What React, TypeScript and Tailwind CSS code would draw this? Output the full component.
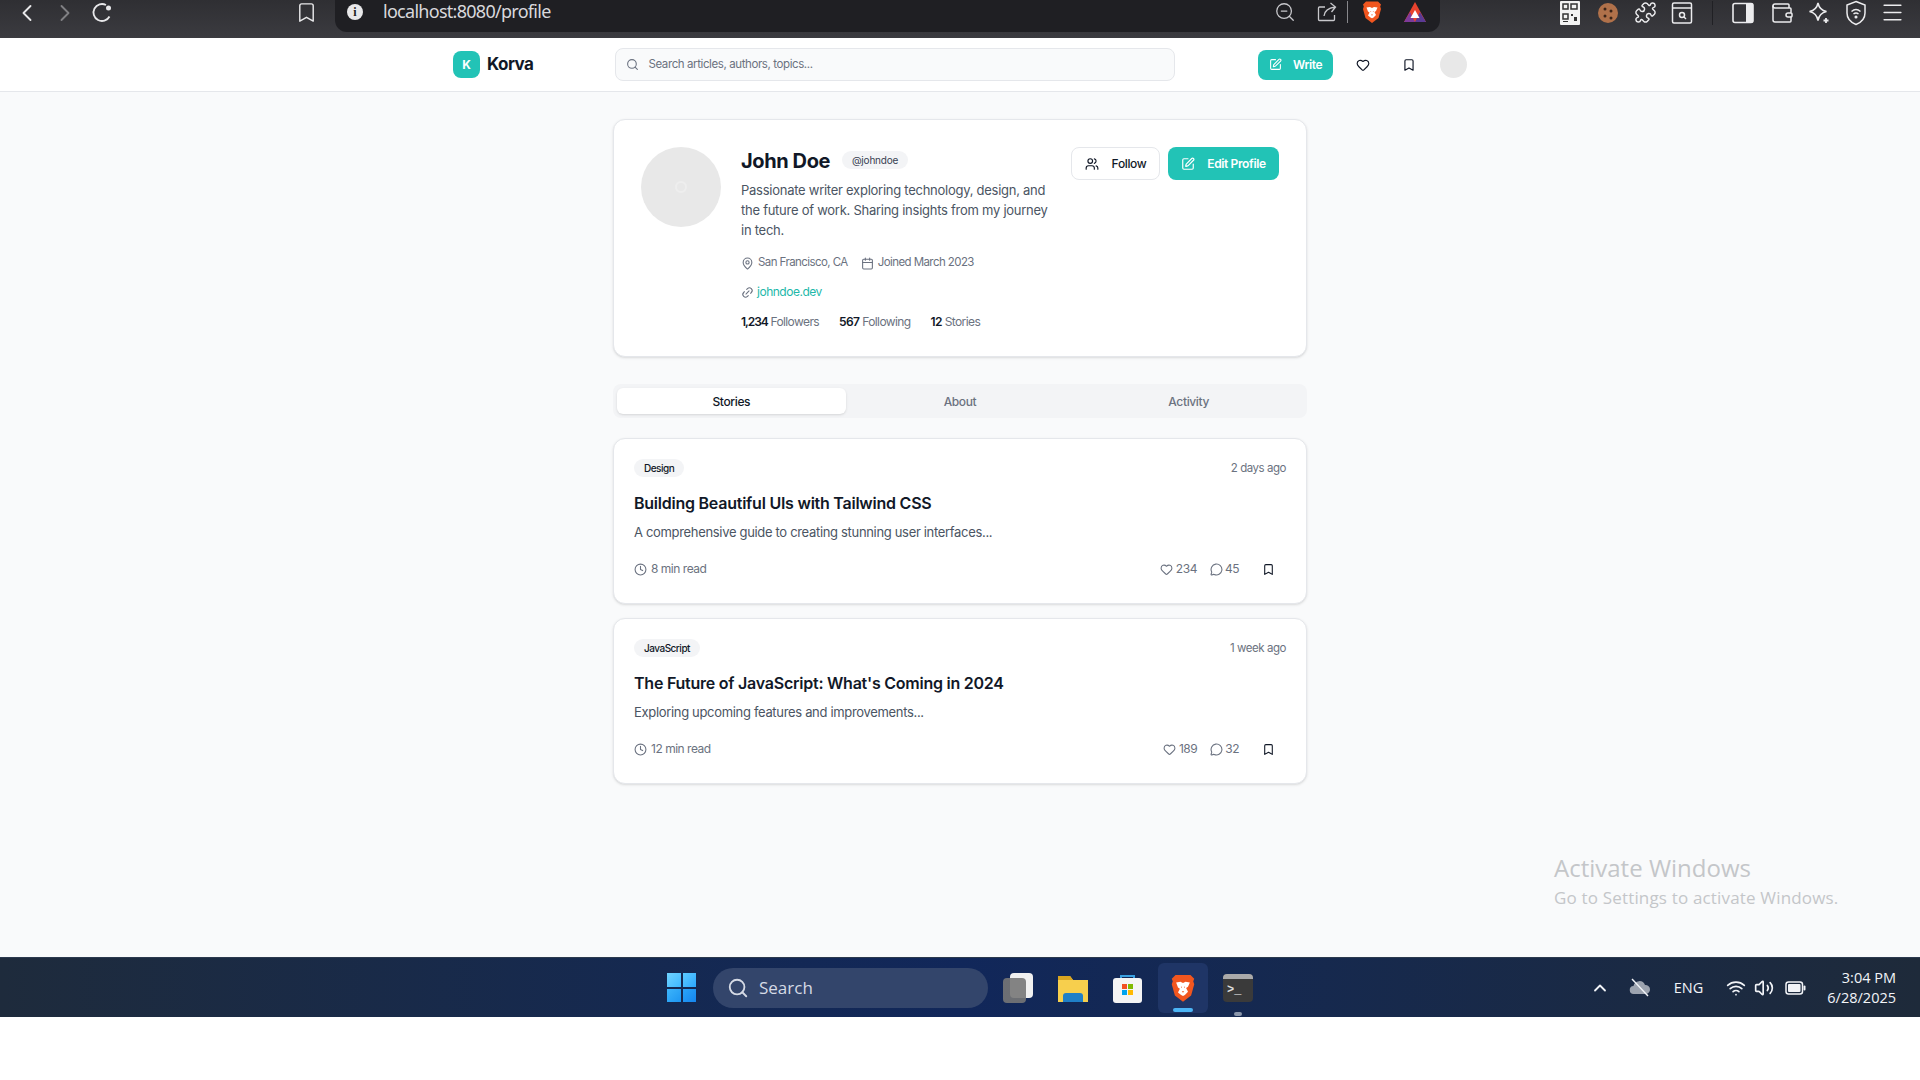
import {
  Bookmark,
  Calendar,
  ChevronLeft,
  ChevronRight,
  ChevronUp,
  Clock,
  Heart,
  Link2,
  MapPin,
  Menu,
  MessageCircle,
  Puzzle,
  Search,
  SquarePen,
  Users,
  Volume2,
  Wallet,
  Wifi,
  ZoomOut,
} from "lucide-react";

const stories = [
  {
    tag: "Design",
    when: "2 days ago",
    title: "Building Beautiful UIs with Tailwind CSS",
    text: "A comprehensive guide to creating stunning user interfaces...",
    read: "8 min read",
    likes: 234,
    comments: 45,
  },
  {
    tag: "JavaScript",
    when: "1 week ago",
    title: "The Future of JavaScript: What's Coming in 2024",
    text: "Exploring upcoming features and improvements...",
    read: "12 min read",
    likes: 189,
    comments: 32,
  },
];

const BraveLogo = ({ size }: { size: number }) => (
  <svg width={size} height={size} viewBox="0 0 24 24">
    <path d="M6 1.500h12l3 3-.8 2 .8 2.500-2.500 9L12 23l-6.500-5L3 9l.8-2.500L3 4.500z" fill="#f1561f" />
    <path d="M6.500 7.500 10 7l2 1 2-1 3.500.5-1.500 3.500-1.500 1 1.500 3-2.500 2.500-1.500.8-1.500-.8L8 15.500l1.500-3-1.500-1z" fill="#fff" />
    <path d="M10.300 11h1l-.5 1zM12.700 11h1l-.5 1zM11 14.500h2l-1 1.200z" fill="#f1561f" />
  </svg>
);

const BrowserBar = () => (
  <div className="h-[38px] flex items-start bg-gradient-to-b from-[#2f2f33] to-[#3b3b40] text-[#e8e8ea]">
    <div className="w-[335px] h-[25px] flex items-center">
      <ChevronLeft size={28} strokeWidth={1.600} className="ml-[13px]" />
      <ChevronRight size={28} strokeWidth={1.600} className="ml-[10px] text-[#808084]" />
      <svg width="23" height="23" viewBox="0 0 23 23" fill="none" stroke="currentColor" strokeWidth="1.800" className="ml-[12px]">
        <path d="M18.500 15.500A8.500 8.500 0 1 1 15 4" />
        <circle cx="17.500" cy="7" r="2.500" fill="currentColor" stroke="none" />
      </svg>
      <Bookmark size={23} strokeWidth={1.500} className="ml-[181px]" />
    </div>
    <div className="w-[1105px] h-[32px] bg-[#1f1f23] rounded-b-xl flex items-center pb-[8px]">
      <div className="ml-[12px] w-[16px] h-[16px] rounded-full bg-[#e8e8ea] text-[#1f1f23] text-[12px] font-bold flex items-center justify-center font-['Liberation_Serif',serif]">
        i
      </div>
      <span className="ml-[20px] -mt-[2px] text-[18px] tracking-[-0.04em] text-[#d8d8dc] font-['Noto_Sans',sans-serif]">
        localhost:8080/profile
      </span>
      <div className="ml-auto flex items-center">
        <ZoomOut size={22} strokeWidth={1.400} className="text-[#c8c8cc]" />
        <svg width="20" height="20" viewBox="0 0 20 20" fill="none" stroke="#c8c8cc" strokeWidth="1.300" className="ml-[21px]">
          <path d="M8 5H2.500A1 1 0 0 0 1.500 6v11.500a1 1 0 0 0 1 1h14a1 1 0 0 0 1-1V13" />
          <path d="M7 14c.5-5 4-8 11-9M13.500 1l5 4-4 5" />
        </svg>
        <div className="ml-[10px] w-px h-[22px] bg-[#88888c]" />
        <div className="ml-[12px]">
          <BraveLogo size={24} />
        </div>
        <svg width="24" height="24" viewBox="0 0 24 24" className="ml-[19px] mr-[13px]">
          <path d="M12 2 23 22H1z" fill="#e8432e" />
          <path d="M1 22 7 12l5 10z" fill="#7d3a9a" />
          <path d="M23 22l-6-10-5 10z" fill="#5a3a94" />
          <path d="M12 10l4.500 8h-9z" fill="#fff" />
        </svg>
      </div>
    </div>
    <div className="flex-1 h-[25px] flex items-center text-[#ececee]">
      <svg width="20" height="24" viewBox="0 0 20 24" className="ml-[120px]">
        <rect width="20" height="24" rx="1" fill="#f2f2f2" />
        <path d="M3 3h5v5H3zM11 3h6v5h-6zM3 13h5v5H3z" fill="none" stroke="#333" strokeWidth="1.500" />
        <path d="M11 13h2v2h-2zM14 16h3v4h-3zM3 20h5v1H3z" fill="#333" />
      </svg>
      <svg width="22" height="24" viewBox="0 0 22 24" className="ml-[17px]">
        <circle cx="11" cy="12" r="10" fill="#b0714a" />
        <circle cx="8" cy="8" r="1.500" fill="#3a2418" />
        <circle cx="14" cy="10" r="1.500" fill="#3a2418" />
        <circle cx="8" cy="15" r="1.500" fill="#3a2418" />
        <circle cx="14" cy="17" r="1.500" fill="#3a2418" />
      </svg>
      <Puzzle size={23} strokeWidth={1.500} className="ml-[15px]" />
      <svg width="22" height="24" viewBox="0 0 22 24" fill="none" stroke="currentColor" strokeWidth="1.500" className="ml-[14px]">
        <rect x="1.500" y="2" width="19" height="20" rx="1.500" />
        <path d="M1.500 7h19" />
        <circle cx="11" cy="14" r="2.500" />
        <path d="m13 16 2 2" />
      </svg>
      <div className="ml-[19px] w-px h-[24px] bg-[#202024]" />
      <svg width="22" height="24" viewBox="0 0 22 24" className="ml-[19px]">
        <rect x="1" y="2.500" width="20" height="19" rx="2" fill="none" stroke="currentColor" strokeWidth="1.600" />
        <rect x="14" y="2.500" width="7" height="19" fill="currentColor" />
      </svg>
      <Wallet size={24} strokeWidth={1.500} className="ml-[16px]" />
      <svg width="24" height="24" viewBox="0 0 24 24" fill="none" stroke="currentColor" strokeWidth="1.500" className="ml-[13px]">
        <path d="M11 2c1 5 3.500 7.500 8.500 8.500-5 1-7.500 3.500-8.500 9-1-5.500-3.500-8-8.500-9C7.500 9.500 10 7 11 2z" />
        <path d="M19 17v5M16.500 19.500h5" strokeWidth="1.800" />
      </svg>
      <svg width="22" height="26" viewBox="0 0 22 26" fill="none" stroke="currentColor" strokeWidth="1.500" className="ml-[14px]">
        <path d="M11 1.500 20 5v8c0 5.500-4 9.500-9 11.500C6 22.500 2 18.500 2 13V5z" />
        <path d="M6.500 11.500c2.700-2.400 6.300-2.400 9 0M8.500 14c1.500-1.200 3.500-1.200 5 0" />
        <circle cx="11" cy="17" r=".8" fill="currentColor" />
      </svg>
      <Menu size={25} strokeWidth={1.500} className="ml-[13px]" />
    </div>
  </div>
);

const Header = () => (
  <header className="h-[54px] bg-white border-b border-[#e5e7eb]">
    <div className="w-[1014px] h-full mx-auto flex items-center">
      <div className="w-[27px] h-[27px] rounded-lg bg-[#22c3b6] text-white text-[12px] font-bold flex items-center justify-center">
        K
      </div>
      <span className="ml-[7px] mt-[1px] text-[17px] font-bold text-[#111827] tracking-[-0.03em]">Korva</span>
      <div className="ml-[82px] w-[561px] h-[33px] rounded-lg border border-[#e5e7eb] bg-[#f9fafb] flex items-center px-[10px] text-[#6b7280]">
        <Search size={13} />
        <span className="ml-[9px] mt-[1px] text-[11.500px] tracking-[-0.035em]">Search articles, authors, topics...</span>
      </div>
      <button className="ml-[83px] w-[75px] h-[30px] rounded-lg bg-[#22c3b6] text-white flex items-center justify-center gap-[11px] text-[12px] font-semibold tracking-[-0.03em]">
        <SquarePen size={13} />
        Write
      </button>
      <Heart size={14} strokeWidth={2} className="ml-[23px] text-[#111827]" />
      <Bookmark size={14} strokeWidth={2} className="ml-[32px] text-[#111827]" />
      <div className="ml-[24px] w-[27px] h-[27px] rounded-full bg-[#e8e8e8]" />
    </div>
  </header>
);

const ProfileCard = () => (
  <section className="h-[238px] rounded-xl border border-[#e5e7eb] bg-white shadow-sm pl-[27px] pr-[27px] pt-[27px] flex items-start">
    <div className="w-[80px] h-[80px] rounded-full bg-[#e8e8e8] shrink-0 flex items-center justify-center">
      <div className="w-[12px] h-[12px] rounded-full border-2 border-[#eeeeee]" />
    </div>
    <div className="ml-[20px] w-[315px]">
      <div className="flex items-center h-[28px]">
        <h1 className="text-[20px] font-bold text-[#111827] tracking-[-0.02em]">John Doe</h1>
        <span className="ml-[12px] -mt-[2px] h-[18px] w-[66px] rounded-full bg-[#f3f4f6] text-[10px] text-[#374151] tracking-[-0.02em] flex items-center justify-center">
          @johndoe
        </span>
      </div>
      <p className="mt-[5px] text-[13px] leading-[20px] text-[#4b5563] tracking-[-0.02em]">
        Passionate writer exploring technology, design, and the future of work. Sharing insights from my journey in tech.
      </p>
      <div className="mt-[13px] flex items-center h-[20px] text-[11.500px] text-[#6b7280] tracking-[-0.05em]">
        <MapPin size={13} />
        <span className="ml-[4px]">San Francisco, CA</span>
        <Calendar size={13} className="ml-[13px]" />
        <span className="ml-[4px]">Joined March 2023</span>
      </div>
      <div className="mt-[9px] flex items-center h-[20px] text-[12px] tracking-[-0.04em]">
        <Link2 size={13} className="text-[#6b7280] -rotate-45" />
        <span className="ml-[3px] text-[#22b8a9]">johndoe.dev</span>
      </div>
      <div className="mt-[10px] flex items-center h-[20px] text-[12px] text-[#6b7280] tracking-[-0.05em] gap-[20px]">
        <span><b className="font-semibold text-[#111827] tracking-[-0.09em]">1,234</b> Followers</span>
        <span><b className="font-semibold text-[#111827]">567</b> Following</span>
        <span><b className="font-semibold text-[#111827]">12</b> Stories</span>
      </div>
    </div>
    <div className="ml-auto flex items-center gap-[8px]">
      <button className="w-[89px] h-[33px] rounded-lg border border-[#e5e7eb] bg-white text-[#111827] flex items-center justify-center gap-[13px] text-[12px] font-medium tracking-[-0.03em]">
        <Users size={14} />
        Follow
      </button>
      <button className="w-[111px] h-[33px] rounded-lg bg-[#22c3b6] text-white flex items-center justify-center gap-[12px] text-[12px] font-semibold tracking-[-0.03em]">
        <SquarePen size={14} />
        Edit Profile
      </button>
    </div>
  </section>
);

const Tabs = () => (
  <div className="mt-[27px] h-[34px] rounded-lg bg-[#f3f4f6] p-[4px] grid grid-cols-3 text-[12px] font-medium text-[#6b7280] tracking-[-0.03em]">
    <div className="rounded-md bg-white shadow-sm text-[#111827] flex items-center justify-center pt-[1px]">Stories</div>
    <div className="flex items-center justify-center pt-[1px]">About</div>
    <div className="flex items-center justify-center pt-[1px]">Activity</div>
  </div>
);

const StoryCard = ({ story }: { story: (typeof stories)[number] }) => (
  <article className="h-[166px] rounded-xl border border-[#e5e7eb] bg-white shadow-sm px-[20px] pt-[20px]">
    <div className="flex items-center justify-between h-[18px]">
      <span className="h-[18px] px-[10px] rounded-full bg-[#f3f4f6] text-[10px] font-medium text-[#111827] tracking-[-0.05em] flex items-center">
        {story.tag}
      </span>
      <span className="mt-[1px] text-[11.500px] text-[#6b7280] tracking-[-0.04em]">{story.when}</span>
    </div>
    <h2 className="mt-[13px] h-[26px] leading-[26px] text-[16px] font-semibold text-[#111827] tracking-[-0.015em]">
      {story.title}
    </h2>
    <p className="mt-[6px] h-[20px] leading-[20px] text-[13px] text-[#4b5563] tracking-[-0.025em]">{story.text}</p>
    <div className="mt-[17px] flex items-center h-[20px] text-[12px] text-[#6b7280] tracking-[-0.04em]">
      <Clock size={13} />
      <span className="ml-[4px]">{story.read}</span>
      <Heart size={13} className="ml-auto" />
      <span className="ml-[3px]">{story.likes}</span>
      <MessageCircle size={13} className="ml-[13px]" />
      <span className="ml-[2px]">{story.comments}</span>
      <Bookmark size={13} strokeWidth={2} className="ml-[23px] mr-[11px] text-[#111827]" />
    </div>
  </article>
);

const Taskbar = () => (
  <div className="h-[60px] grid grid-cols-[1fr_auto_1fr] items-center bg-gradient-to-r from-[#1e2b3c] via-[#11275a] to-[#1e2a3a] border-t border-[#2c3a4e] text-white">
    <div />
    <div className="flex items-center">
      <div className="grid grid-cols-2 gap-[2px] w-[29px] h-[29px]">
        <div className="bg-gradient-to-br from-[#6fd3ff] to-[#3cb8ff]" />
        <div className="bg-gradient-to-br from-[#5ccbff] to-[#2aa8ff]" />
        <div className="bg-gradient-to-br from-[#3cb4fa] to-[#1c96f2]" />
        <div className="bg-gradient-to-br from-[#2aa4f8] to-[#1585ee]" />
      </div>
      <div className="ml-[17px] w-[275px] h-[40px] rounded-full bg-[#33456b] flex items-center pl-[14px] text-[#d5dae5]">
        <Search size={22} strokeWidth={2} />
        <span className="ml-[10px] text-[17px] font-['Open_Sans',sans-serif]">Search</span>
      </div>
      <div className="ml-[15px] relative w-[30px] h-[30px]">
        <div className="absolute right-0 top-0 w-[23px] h-[25px] rounded-sm bg-[#f0f0f0]" />
        <div className="absolute left-0 bottom-0 w-[23px] h-[25px] rounded-sm bg-[#777777]/90" />
      </div>
      <svg width="30" height="28" viewBox="0 0 30 28" className="ml-[25px]">
        <path d="M0 2h12l3 4h15v22H0z" fill="#f7cf4d" />
        <path d="M0 2h12l3 4H0z" fill="#d9a520" />
        <path d="M5 28v-6a3 3 0 0 1 3-3h14a3 3 0 0 1 3 3v6z" fill="#1f7fc8" />
      </svg>
      <svg width="29" height="30" viewBox="0 0 29 30" className="ml-[25px]">
        <path d="M8 7V3h13v4" fill="none" stroke="#3aa0e0" strokeWidth="2" />
        <rect y="5" width="29" height="25" rx="3" fill="#f4f4f4" />
        <rect x="9" y="11" width="5" height="5" fill="#f25022" />
        <rect x="15" y="11" width="5" height="5" fill="#7fba00" />
        <rect x="9" y="17" width="5" height="5" fill="#00a4ef" />
        <rect x="15" y="17" width="5" height="5" fill="#ffb900" />
      </svg>
      <div className="relative ml-[16px] w-[50px] h-[50px] rounded-md bg-[#1f3566] flex items-center justify-center">
        <BraveLogo size={30} />
        <div className="absolute bottom-[1px] left-[15px] w-[20px] h-[4px] rounded-full bg-[#4cb5f5]" />
      </div>
      <div className="relative ml-[15px] w-[30px] h-[28px] rounded-sm bg-[#3a3a3a]">
        <div className="h-[5px] rounded-t-sm bg-[#aaaaaa]" />
        <span className="absolute left-[4px] top-[9px] text-[12px] font-bold leading-[14px] font-['Liberation_Mono',monospace] text-[#dddddd]">
          &gt;_
        </span>
        <div className="absolute -bottom-[14px] left-[11px] w-[8px] h-[4px] rounded-full bg-[#8b97ab]" />
      </div>
    </div>
    <div className="flex items-center justify-end text-[#f2f4f8]">
      <ChevronUp size={20} strokeWidth={2.200} />
      <svg width="22" height="20" viewBox="0 0 22 20" className="ml-[19px]">
        <path d="M5 16a4 4 0 0 1-.5-8 6 6 0 0 1 11.500-1 4.500 4.500 0 0 1 1 9z" fill="#9ca3af" />
        <path d="m3 1 16 17" stroke="#f2f4f8" strokeWidth="1.400" />
      </svg>
      <span className="ml-[23px] text-[14.500px] font-['Open_Sans',sans-serif]">ENG</span>
      <Wifi size={20} className="ml-[23px]" />
      <Volume2 size={20} className="ml-[8px]" />
      <svg width="21" height="14" viewBox="0 0 21 14" className="ml-[11px]">
        <rect x="1" y="1" width="16.500" height="12" rx="2.500" fill="none" stroke="currentColor" strokeWidth="1.500" />
        <rect x="3" y="3" width="12.500" height="8" rx="1" fill="currentColor" />
        <rect x="18.500" y="4.500" width="2" height="5" rx="1" fill="currentColor" />
      </svg>
      <div className="ml-[21px] mr-[24px] text-right text-[14.500px] leading-[20px] font-['Open_Sans',sans-serif]">
        <div>3:04 PM</div>
        <div>6/28/2025</div>
      </div>
    </div>
  </div>
);

function App() {
  return (
    <div className="h-[1080px] flex flex-col bg-white font-['Inter',sans-serif] overflow-hidden">
      <BrowserBar />
      <Header />
      <main className="relative flex-1 bg-[#f9fafb]">
        <div className="w-[694px] mx-auto pt-[27px]">
          <ProfileCard />
          <Tabs />
          <div className="mt-[20px] flex flex-col gap-[14px]">
            {stories.map((story) => (
              <StoryCard key={story.title} story={story} />
            ))}
          </div>
        </div>
        <div className="absolute left-[1554px] top-[760px] text-[#c4c6c9] font-['Open_Sans',sans-serif]">
          <div className="text-[24px] leading-[32px]">Activate Windows</div>
          <div className="text-[17px] leading-[25px] mt-[1px] tracking-[0.01em]">Go to Settings to activate Windows.</div>
        </div>
      </main>
      <Taskbar />
      <div className="h-[63px] bg-white" />
    </div>
  );
}

export default App;
